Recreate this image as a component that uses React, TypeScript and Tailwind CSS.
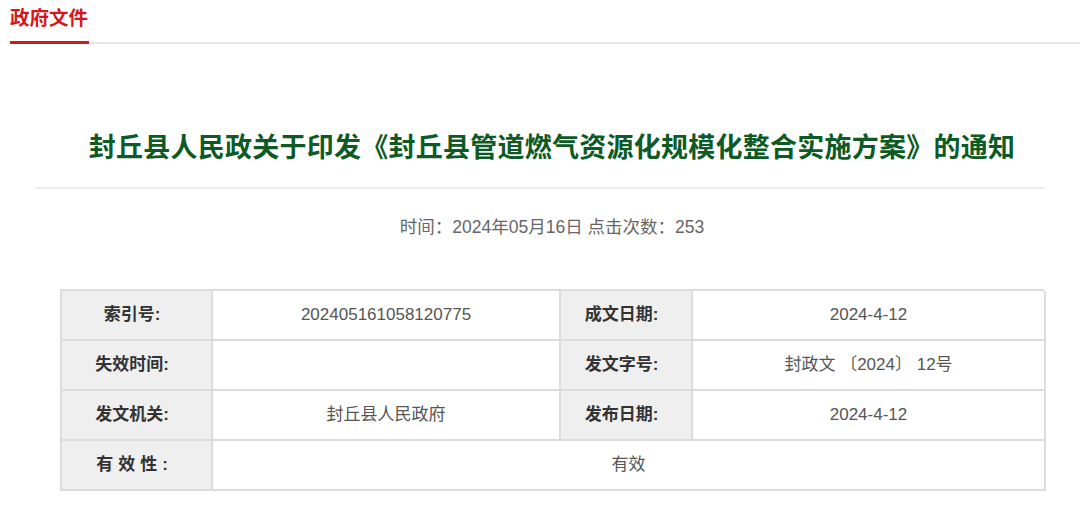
import React from "react";

const font = { fontFamily: '"Liberation Sans", "Noto Sans CJK SC", sans-serif' };

function Label({ children }: { children: React.ReactNode }) {
  return (
    <div className="flex items-center justify-center pr-[9px] bg-[#efefef] border-r-2 border-b-2 border-[#dcdcdc] text-[17px] font-bold text-[#333]">
      {children}
    </div>
  );
}

function Value({ children, span }: { children?: React.ReactNode; span?: boolean }) {
  return (
    <div
      className={
        "flex items-center justify-center bg-white border-r-2 border-b-2 border-[#dcdcdc] text-[17px] text-[#555]" +
        (span ? " col-span-3" : "")
      }
    >
      {children}
    </div>
  );
}

export default function App() {
  return (
    <div className="w-[1080px] h-[514px] bg-white overflow-hidden" style={font}>
      <div className="flex items-end h-[45px]">
        <div className="ml-[10px] w-[79px] h-[45px] flex flex-col justify-between">
          <div className="pt-[6px] text-[19.5px] leading-[24px] text-[#d4171d] font-semibold whitespace-nowrap">政府文件</div>
          <div className="h-[3px] bg-[#d4171d] mb-[1px]" />
        </div>
        <div className="flex-1 h-[2px] bg-[#e6e6e6] mb-[1px]" />
      </div>

      <div className="ml-[60px] w-[984px] mt-[86px] text-center text-[27px] leading-[34px] font-bold text-[#0d5a24] whitespace-nowrap tracking-[0.25px]">
        封丘县人民政关于印发《封丘县管道燃气资源化规模化整合实施方案》的通知
      </div>
      <div className="ml-[35px] w-[1010px] h-[2px] bg-[#ececec] mt-[22px]" />

      <div className="ml-[60px] w-[984px] mt-[28px] text-center text-[17.5px] leading-[20px] text-[#666]">
        时间：2024年05月16日 点击次数：253
      </div>

      <div className="ml-[60px] w-[984px] mt-[52px] grid grid-cols-[151px_348px_132px_353px] auto-rows-[50px] border-l-2 border-t-2 border-[#dcdcdc]">
        <Label>索引号:</Label>
        <Value>202405161058120775</Value>
        <Label>成文日期:</Label>
        <Value>2024-4-12</Value>

        <Label>失效时间:</Label>
        <Value />
        <Label>发文字号:</Label>
        <Value>封政文 〔2024〕 12号</Value>

        <Label>发文机关:</Label>
        <Value>封丘县人民政府</Value>
        <Label>发布日期:</Label>
        <Value>2024-4-12</Value>

        <Label>
          <span className="tracking-[5px]">有效性</span>:
        </Label>
        <Value span>有效</Value>
      </div>
    </div>
  );
}
